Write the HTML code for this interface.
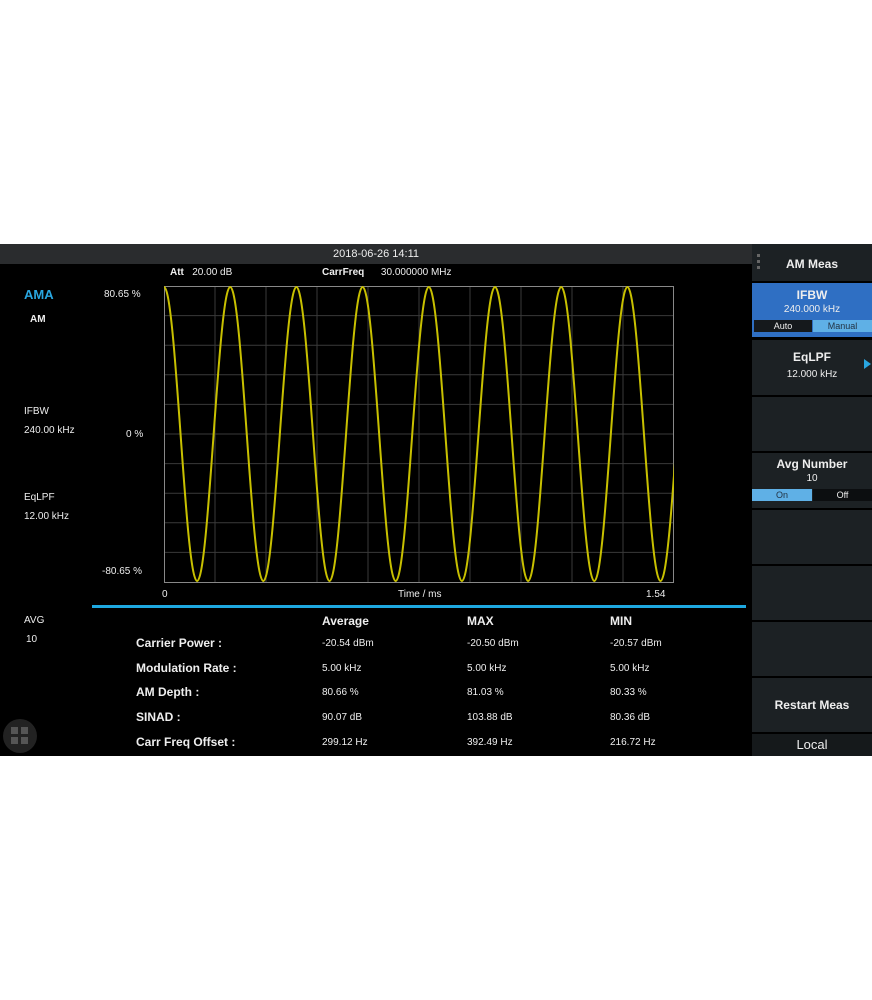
<!DOCTYPE html>
<html><head><meta charset="utf-8"><style>
body{margin:0;background:#fff;width:872px;height:1000px;position:relative;font-family:"Liberation Sans",sans-serif;overflow:hidden}
.scr{position:absolute;left:0;top:244px;width:872px;height:512px;background:#000;color:#eee}
.t{position:absolute;font-size:11px;white-space:nowrap}
.b{font-weight:bold}
.top{position:absolute;left:0;top:0;width:752px;height:20px;background:#2a2c2e;text-align:center;font-size:11px;line-height:20px;color:#eee}
.rp{position:absolute;left:752px;top:0;width:120px;height:512px;background:#000}
.btn{position:absolute;left:0;width:120px;background:#1c2124;text-align:center;color:#eee;font-size:11px}
</style></head><body>
<div class="scr">
<div class="top">2018-06-26 14:11</div>
<div class="t" style="left:24px;top:43px;color:#29a6e0;font-size:13px;font-weight:bold">AMA</div>
<div class="t" style="left:30px;top:70px;font-size:10px;font-weight:bold">AM</div>
<div class="t" style="left:24px;top:162px;font-size:10px">IFBW</div>
<div class="t" style="left:24px;top:181px;font-size:10px">240.00 kHz</div>
<div class="t" style="left:24px;top:248px;font-size:10px">EqLPF</div>
<div class="t" style="left:24px;top:267px;font-size:10px">12.00 kHz</div>
<div class="t" style="left:24px;top:371px;font-size:10px">AVG</div>
<div class="t" style="left:26px;top:390px;font-size:10px">10</div>
<div class="t" style="left:170px;top:23px;font-size:10px"><b>Att</b>&nbsp;&nbsp;&nbsp;20.00 dB</div>
<div class="t" style="left:322px;top:23px;font-size:10px"><b>CarrFreq</b>&nbsp;&nbsp;&nbsp;&nbsp;&nbsp;&nbsp;30.000000 MHz</div>
<div class="t" style="left:104px;top:45px;font-size:10px">80.65 %</div>
<div class="t" style="left:126px;top:185px;font-size:10px">0 %</div>
<div class="t" style="left:102px;top:322px;font-size:10px">-80.65 %</div>
<div class="t" style="left:162px;top:345px;font-size:10px">0</div>
<div class="t" style="left:398px;top:345px;font-size:10px">Time / ms</div>
<div class="t" style="left:646px;top:345px;font-size:10px">1.54</div>
<svg style="position:absolute;left:0;top:0" width="752" height="512">
<defs><clipPath id="c"><rect x="164" y="40" width="510" height="300"/></clipPath></defs>
<g stroke="#3a3a3a" stroke-width="1">
<path d="M215 42V338M266 42V338M317 42V338M368 42V338M419 42V338M470 42V338M521 42V338M572 42V338M623 42V338"/>
<path d="M164 71.6H674M164 101.2H674M164 130.8H674M164 160.4H674M164 190H674M164 219.6H674M164 249.2H674M164 278.8H674M164 308.4H674"/>
</g>
<rect x="164.5" y="42.5" width="509" height="296" fill="none" stroke="#888" stroke-width="1"/>
<path clip-path="url(#c)" fill="none" stroke="#c8c000" stroke-width="2" d="M164 43c12.05 0 21.05 294 33.1 294c12.05 0 21.05 -294 33.1 -294c12.05 0 21.05 294 33.1 294c12.05 0 21.05 -294 33.1 -294c12.05 0 21.05 294 33.1 294c12.05 0 21.05 -294 33.1 -294c12.05 0 21.05 294 33.1 294c12.05 0 21.05 -294 33.1 -294c12.05 0 21.05 294 33.1 294c12.05 0 21.05 -294 33.1 -294c12.05 0 21.05 294 33.1 294c12.05 0 21.05 -294 33.1 -294c12.05 0 21.05 294 33.1 294c12.05 0 21.05 -294 33.1 -294c12.05 0 21.05 294 33.1 294c12.05 0 21.05 -294 33.1 -294"/>
<rect x="92" y="361" width="654" height="3" fill="#1ea8e0"/>
<circle cx="20" cy="492" r="17" fill="#222"/>
<g fill="#555"><rect x="11" y="483" width="7" height="7"/><rect x="21" y="483" width="7" height="7"/><rect x="11" y="493" width="7" height="7"/><rect x="21" y="493" width="7" height="7"/></g>
</svg>
<div class="t b" style="left:322px;top:370px;font-size:12px">Average</div>
<div class="t b" style="left:467px;top:370px;font-size:12px">MAX</div>
<div class="t b" style="left:610px;top:370px;font-size:12px">MIN</div>
<div class="t b" style="left:136px;top:392px;font-size:12px">Carrier Power :</div>
<div class="t b" style="left:136px;top:417px;font-size:12px">Modulation Rate :</div>
<div class="t b" style="left:136px;top:441px;font-size:12px">AM Depth :</div>
<div class="t b" style="left:136px;top:466px;font-size:12px">SINAD :</div>
<div class="t b" style="left:136px;top:491px;font-size:12px">Carr Freq Offset :</div>
<div class="t" style="left:322px;top:394px;font-size:10px">-20.54 dBm</div>
<div class="t" style="left:322px;top:419px;font-size:10px">5.00 kHz</div>
<div class="t" style="left:322px;top:443px;font-size:10px">80.66 %</div>
<div class="t" style="left:322px;top:468px;font-size:10px">90.07 dB</div>
<div class="t" style="left:322px;top:493px;font-size:10px">299.12 Hz</div>
<div class="t" style="left:467px;top:394px;font-size:10px">-20.50 dBm</div>
<div class="t" style="left:467px;top:419px;font-size:10px">5.00 kHz</div>
<div class="t" style="left:467px;top:443px;font-size:10px">81.03 %</div>
<div class="t" style="left:467px;top:468px;font-size:10px">103.88 dB</div>
<div class="t" style="left:467px;top:493px;font-size:10px">392.49 Hz</div>
<div class="t" style="left:610px;top:394px;font-size:10px">-20.57 dBm</div>
<div class="t" style="left:610px;top:419px;font-size:10px">5.00 kHz</div>
<div class="t" style="left:610px;top:443px;font-size:10px">80.33 %</div>
<div class="t" style="left:610px;top:468px;font-size:10px">80.36 dB</div>
<div class="t" style="left:610px;top:493px;font-size:10px">216.72 Hz</div>
<div class="rp">
<div class="btn" style="top:0;height:37px;line-height:40px;background:#1c2124" ><b style="font-size:12px">AM Meas</b><div style="position:absolute;left:5px;top:10px;width:3px;height:16px;background:repeating-linear-gradient(#666 0 3px,transparent 3px 6px)"></div></div>
<div class="btn" style="top:39px;height:54px;background:#2f6fc3"><div class="b" style="font-size:12px;margin-top:5px">IFBW</div><div style="font-size:10px;margin-top:2px">240.000 kHz</div>
<div style="position:absolute;left:2px;top:37px;width:58px;height:12px;background:#15191c;font-size:9px;line-height:12px">Auto</div><div style="position:absolute;left:61px;top:37px;width:59px;height:12px;background:#5fb0e6;color:#234;font-size:9px;line-height:12px">Manual</div></div>
<div class="btn" style="top:96px;height:55px"><div class="b" style="font-size:12px;margin-top:10px">EqLPF</div><div style="font-size:10px;margin-top:5px">12.000 kHz</div><div style="position:absolute;right:1px;top:19px;width:0;height:0;border-top:5px solid transparent;border-bottom:5px solid transparent;border-left:7px solid #29a6e0"></div></div>
<div class="btn" style="top:153px;height:54px"></div>
<div class="btn" style="top:209px;height:55px"><div class="b" style="font-size:12px;margin-top:4px">Avg Number</div><div style="font-size:10px;margin-top:2px">10</div>
<div style="position:absolute;left:0;top:36px;width:60px;height:12px;background:#5fb0e6;color:#234;font-size:9px;line-height:12px">On</div><div style="position:absolute;left:61px;top:36px;width:59px;height:12px;background:#0c0e10;font-size:9px;line-height:12px">Off</div></div>
<div class="btn" style="top:266px;height:54px"></div>
<div class="btn" style="top:322px;height:54px"></div>
<div class="btn" style="top:378px;height:54px"></div>
<div class="btn" style="top:434px;height:54px;line-height:54px"><b style="font-size:12px">Restart Meas</b></div>
<div class="btn" style="top:490px;height:22px;line-height:22px;background:#15191b;font-size:13px">Local</div>
</div>
</div>
</body></html>
